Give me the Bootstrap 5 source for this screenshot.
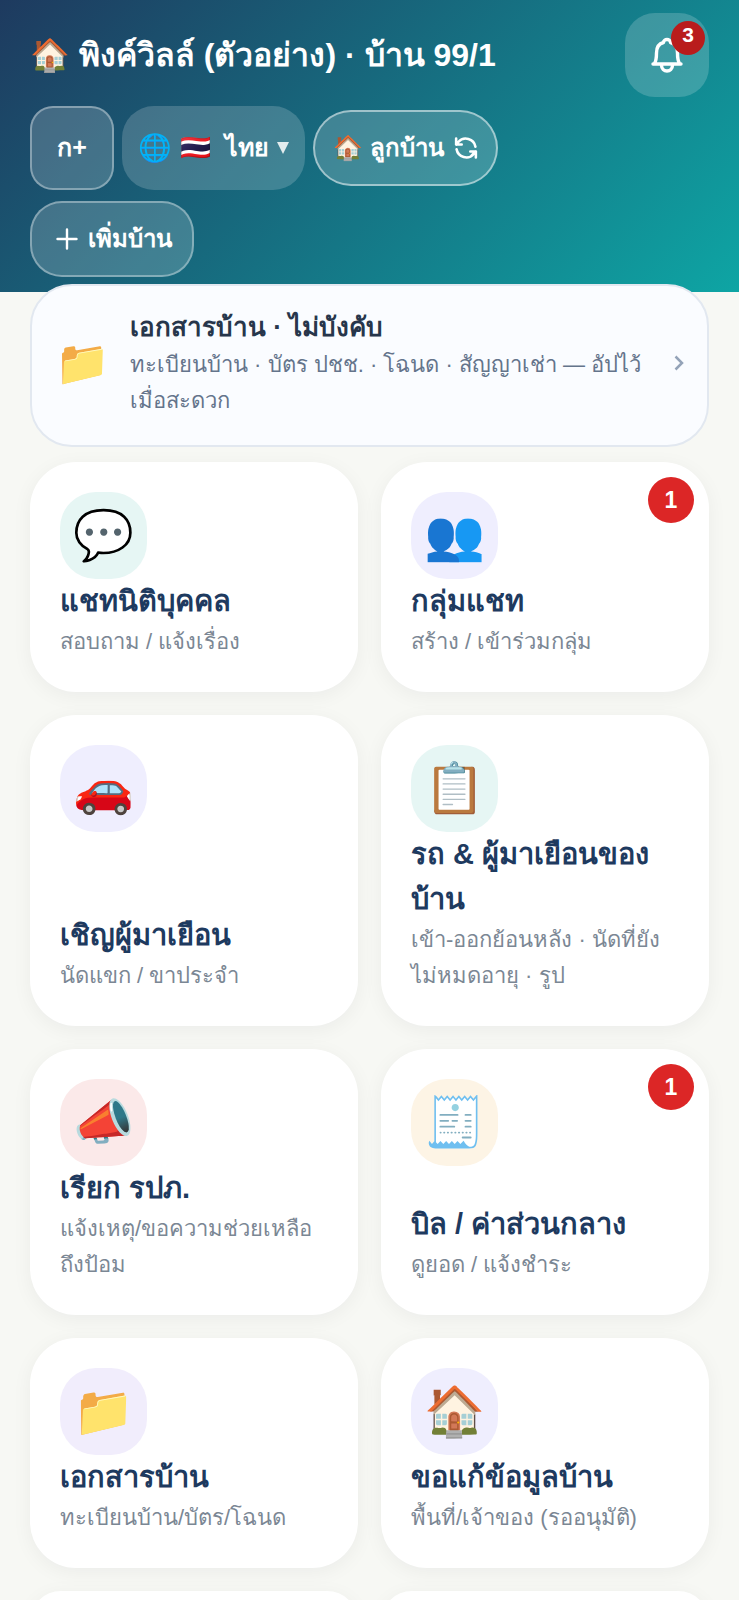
<!DOCTYPE html>
<html lang="th">
<head>
<meta charset="utf-8">
<meta name="viewport" content="width=device-width, initial-scale=1">
<title>พิงค์วิลล์ · บ้าน 99/1</title>
<link href="https://cdn.jsdelivr.net/npm/bootstrap@5.3.0/dist/css/bootstrap.min.css" rel="stylesheet">
<style>
  body { font-family: "Liberation Sans", sans-serif; background: #f7f8f4; }
  .app-shell { scrollbar-width: none; }
  .app-header { background: linear-gradient(135deg, #1e3a5f, #0ea5a4); padding: 13px 30px 15px; color: #fff; }
  .app-title { font-size: 32px; line-height: 84px; }
  .bell-btn, .size-btn { width: 84px; height: 84px; color: #fff; }
  .bell-btn { background: rgba(255,255,255,.18); border: 0; border-radius: 30px; }
  .bell-count { width: 34px; height: 34px; top: 8px; right: 4px; background: #b91c1c; font-size: 21px; line-height: 28px; }
  .tools { margin-top: 9px; gap: 11px 8px; }
  .size-btn, .pill-btn { background: rgba(255,255,255,.18); border: 2px solid rgba(255,255,255,.35); font-size: 25px; font-weight: 700; color: #fff; }
  .size-btn { border-radius: 23px; }
  .pill-btn { height: 76px; padding: 0 18px; font-size: 24px; border-radius: 38px; gap: 10px; }
  .role-btn { border-color: rgba(255,255,255,.5); }
  .add-btn { padding: 0 20px 0 24px; border-radius: 32px; }
  .lang-box { height: 84px; padding: 0 16px 0 16px; border-radius: 32px; background: rgba(255,255,255,.18); font-size: 27px; gap: 8px; }
  .lang-box select { appearance: none; background: none; border: 0; padding: 0; color: #fff; font-size: 25px; font-weight: 700; }
  .lang-box option { color: #1e293b; }
  .app-main { padding: 0 30px 30px; }
  .docs-link { margin-top: -8px; padding: 21px 23px 26px; border: 2px solid #e2e8f0; border-radius: 42px; background: #fafcff; gap: 20px; }
  .docs-icon { font-size: 44px; line-height: 48px; width: 55px; }
  .docs-title { font-size: 26px; line-height: 40px; color: #27364b; }
  .docs-note { font-size: 22px; line-height: 36px; color: #64748b; }
  .menu-grid { gap: 23px; margin-top: 15px; grid-template-columns: 1fr 1fr; }
  .tile { padding: 30px 30px 32px; border-radius: 46px; background: #fff; box-shadow: 0 4px 20px rgba(15,23,42,.05); }
  .tile-icon { width: 87px; height: 87px; border-radius: 36px; font-size: 49px; }
  .tile-title { font-size: 29px; line-height: 45px; color: #1e3a5f; }
  .tile-note { font-size: 22px; line-height: 36px; color: #7b8794; }
  .tile-count { width: 46px; height: 46px; top: 15px; right: 15px; background: #dc2626; font-size: 23px; }
  .tone-teal { background: #e6f6f4; } .tone-indigo { background: #efeefe; }
  .tone-red { background: #fbe9e9; } .tone-amber { background: #fdf4e5; } .tone-violet { background: #f1edfc; }
</style>
</head>
<body>
<div class="app-shell vh-100 overflow-auto">
  <header class="app-header d-flex align-items-start">
    <div class="flex-grow-1">
      <h1 class="app-title fw-bold mb-0">🏠 พิงค์วิลล์ (ตัวอย่าง) · บ้าน 99/1</h1>
      <div class="tools d-flex flex-wrap align-items-center">
        <button type="button" class="size-btn p-0">ก+</button>
        <label class="lang-box d-flex align-items-center">
          <span>🌐</span>
          <select aria-label="ภาษา"><option>🇹🇭&nbsp;&nbsp;ไทย</option></select>
          <svg width="12" height="12" viewBox="0 0 12 12" fill="currentColor" opacity=".85"><path d="M0 0H12L6 12Z"/></svg>
        </label>
        <button type="button" class="pill-btn role-btn d-flex align-items-center">
          <span>🏠 ลูกบ้าน</span>
          <svg width="24" height="24" viewBox="0 0 28 28" fill="none" stroke="currentColor" stroke-width="3" stroke-linecap="round" stroke-linejoin="round"><path d="M25 12.500A11.500 11.500 0 0 0 5 7L2.500 10M2.500 3V10H9M3 15.500A11.500 11.500 0 0 0 23 21L25.500 18M25.500 25V18H19M20 23.500L24 19"/></svg>
        </button>
        <button type="button" class="pill-btn add-btn d-flex align-items-center">
          <svg width="22" height="22" viewBox="0 0 22 22" stroke="currentColor" stroke-width="2.400" stroke-linecap="round"><path d="M11 1.500V20.500M1.500 11H20.500"/></svg>
          <span>เพิ่มบ้าน</span>
        </button>
      </div>
    </div>
    <button type="button" class="bell-btn position-relative flex-shrink-0 d-flex align-items-center justify-content-center p-0" aria-label="การแจ้งเตือน">
      <svg width="32" height="36" viewBox="0 0 32 36" fill="none" stroke="currentColor" stroke-width="3.400" stroke-linecap="round" stroke-linejoin="round"><path d="M2 27H30M3.500 26.500C5 24 5.500 21 5.500 16C5.500 10 8.500 6.500 12.500 5.500C12.500 1.500 19.500 1.500 19.500 5.500C23.500 6.500 26.500 10 26.500 16C26.500 21 27 24 28.500 26.500"/><path d="M10.500 28C10.500 36 21.500 36 21.500 28"/></svg>
      <span class="bell-count position-absolute rounded-circle fw-bold">3</span>
    </button>
  </header>

  <main class="app-main">
    <a href="#docs" class="docs-link position-relative d-flex align-items-center text-decoration-none">
      <span class="docs-icon flex-shrink-0 text-center">📁</span>
      <span class="flex-grow-1">
        <strong class="docs-title d-block">เอกสารบ้าน · ไม่บังคับ</strong>
        <span class="docs-note d-block">ทะเบียนบ้าน · บัตร ปชช. · โฉนด · สัญญาเช่า — อัปไว้เมื่อสะดวก</span>
      </span>
      <svg class="flex-shrink-0" width="10" height="16" viewBox="0 0 10 16" fill="none" stroke="#94a3b8" stroke-width="2.500"><path d="M1.500 1.500L8 8L1.500 14.500"/></svg>
    </a>

    <nav class="menu-grid d-grid" aria-label="เมนู">
      <a href="#chat" class="tile position-relative d-flex flex-column justify-content-between text-decoration-none">
        <span class="tile-icon tone-teal d-flex align-items-center justify-content-center">💬</span>
        <span><strong class="tile-title d-block">แชทนิติบุคคล</strong><span class="tile-note d-block">สอบถาม / แจ้งเรื่อง</span></span>
      </a>
      <a href="#groups" class="tile position-relative d-flex flex-column justify-content-between text-decoration-none">
        <span class="tile-icon tone-indigo d-flex align-items-center justify-content-center">👥</span>
        <span><strong class="tile-title d-block">กลุ่มแชท</strong><span class="tile-note d-block">สร้าง / เข้าร่วมกลุ่ม</span></span>
        <span class="tile-count position-absolute rounded-circle d-flex align-items-center justify-content-center fw-bold text-white">1</span>
      </a>
      <a href="#invite" class="tile position-relative d-flex flex-column justify-content-between text-decoration-none">
        <span class="tile-icon tone-indigo d-flex align-items-center justify-content-center">🚗</span>
        <span><strong class="tile-title d-block">เชิญผู้มาเยือน</strong><span class="tile-note d-block">นัดแขก / ขาประจำ</span></span>
      </a>
      <a href="#visits" class="tile position-relative d-flex flex-column justify-content-between text-decoration-none">
        <span class="tile-icon tone-teal d-flex align-items-center justify-content-center">📋</span>
        <span><strong class="tile-title d-block">รถ &amp; ผู้มาเยือนของบ้าน</strong><span class="tile-note d-block">เข้า-ออกย้อนหลัง · นัดที่ยังไม่หมดอายุ · รูป</span></span>
      </a>
      <a href="#guard" class="tile position-relative d-flex flex-column justify-content-between text-decoration-none">
        <span class="tile-icon tone-red d-flex align-items-center justify-content-center">📣</span>
        <span><strong class="tile-title d-block">เรียก รปภ.</strong><span class="tile-note d-block">แจ้งเหตุ/ขอความช่วยเหลือถึงป้อม</span></span>
      </a>
      <a href="#bills" class="tile position-relative d-flex flex-column justify-content-between text-decoration-none">
        <span class="tile-icon tone-amber d-flex align-items-center justify-content-center">🧾</span>
        <span><strong class="tile-title d-block">บิล / ค่าส่วนกลาง</strong><span class="tile-note d-block">ดูยอด / แจ้งชำระ</span></span>
        <span class="tile-count position-absolute rounded-circle d-flex align-items-center justify-content-center fw-bold text-white">1</span>
      </a>
      <a href="#files" class="tile position-relative d-flex flex-column justify-content-between text-decoration-none">
        <span class="tile-icon tone-violet d-flex align-items-center justify-content-center">📁</span>
        <span><strong class="tile-title d-block">เอกสารบ้าน</strong><span class="tile-note d-block">ทะเบียนบ้าน/บัตร/โฉนด</span></span>
      </a>
      <a href="#edit" class="tile position-relative d-flex flex-column justify-content-between text-decoration-none">
        <span class="tile-icon tone-indigo d-flex align-items-center justify-content-center">🏠</span>
        <span><strong class="tile-title d-block">ขอแก้ข้อมูลบ้าน</strong><span class="tile-note d-block">พื้นที่/เจ้าของ (รออนุมัติ)</span></span>
      </a>
      <div class="tile"></div>
      <div class="tile"></div>
    </nav>
  </main>
</div>
<script src="https://cdn.jsdelivr.net/npm/bootstrap@5.3.0/dist/js/bootstrap.bundle.min.js"></script>
</body>
</html>
